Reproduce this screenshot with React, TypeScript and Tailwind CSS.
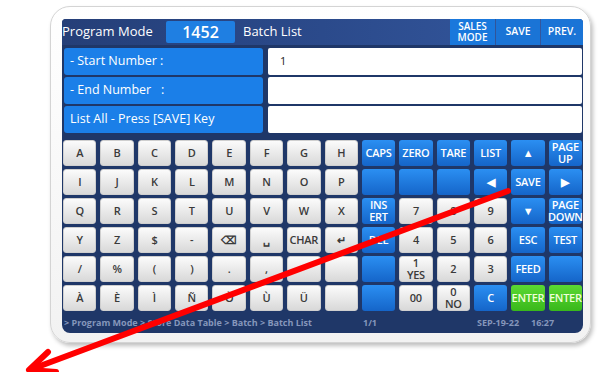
type Kind = "w" | "b" | "g";
type Key = { t: Kind; l?: string };

const w = (l?: string): Key => ({ t: "w", l });
const b = (l?: string): Key => ({ t: "b", l });
const g = (l?: string): Key => ({ t: "g", l });

const keys: Key[][] = [
  [w("A"), w("B"), w("C"), w("D"), w("E"), w("F"), w("G"), w("H"), b("CAPS"), b("ZERO"), b("TARE"), b("LIST"), b("▲"), b("PAGE\nUP")],
  [w("I"), w("J"), w("K"), w("L"), w("M"), w("N"), w("O"), w("P"), b(), b(), b(), b("◀"), b("SAVE"), b("▶")],
  [w("Q"), w("R"), w("S"), w("T"), w("U"), w("V"), w("W"), w("X"), b("INS\nERT"), w("7"), w("8"), w("9"), b("▼"), b("PAGE\nDOWN")],
  [w("Y"), w("Z"), w("$"), w("-"), w("⌫"), w("␣"), w("CHAR"), w("↵"), b("DEL"), w("4"), w("5"), w("6"), b("ESC"), b("TEST")],
  [w("/"), w("%"), w("("), w(")"), w("."), w(","), w("\""), w(), b(), w("1\nYES"), w("2"), w("3"), b("FEED"), b()],
  [w("À"), w("È"), w("Ì"), w("Ñ"), w("Ò"), w("Ù"), w("Ü"), w(), b(), w("00"), w("0\nNO"), b("C"), g("ENTER"), g("ENTER")],
];

const style: Record<Kind, string> = {
  w: "bg-gradient-to-b from-[#fbfbfb] to-[#d9d9d9] text-[#3a3a3a] border border-[#cfcfcf]",
  b: "bg-gradient-to-b from-[#2b8ff2] to-[#1565c9] text-white",
  g: "bg-gradient-to-b from-[#5ad932] to-[#39b81b] text-[#efffd9]",
};

function Pad({ k }: { k: Key }) {
  return (
    <div
      className={`h-[26px] rounded-[3px] flex items-center justify-center text-center whitespace-pre-line leading-[12px] text-[11px] font-semibold tracking-tight ${style[k.t]}`}
    >
      {k.l}
    </div>
  );
}

function FormRow({ label, value }: { label: string; value?: string }) {
  return (
    <div className="flex h-[27px] gap-[5px]">
      <div className="w-[199px] rounded-[3px] bg-[#1b7fe8] text-white text-[12.5px] flex items-center pl-[6px] whitespace-pre">{label}</div>
      <div className="flex-1 bg-white rounded-[2px] text-[#222] text-[11px] flex items-center pl-[12px]">{value}</div>
    </div>
  );
}

export default function App() {
  return (
    <div className="relative w-[600px] h-[372px] bg-white overflow-hidden" style={{ fontFamily: '"Open Sans", "Noto Sans", sans-serif' }}>
      <div className="pt-[6px] pl-[50px]">
        <div className="w-[541px] h-[337px] rounded-[20px] bg-gradient-to-b from-white to-[#f2f2f2] border border-[#d4d4d4] shadow-[2px_3px_4px_rgba(0,0,0,0.25)] pt-[12px] pl-[11px] pr-[7px] pb-[9px]">
          <div className="h-full rounded-[8px] rounded-t-[4px] bg-[#1f3768] flex flex-col overflow-hidden">
            <div className="h-[26px] flex items-stretch bg-gradient-to-r from-[#253f78] via-[#2b4a8b] to-[#3559a0] text-white">
              <div className="text-[13px] flex items-center w-[104px]">Program Mode</div>
              <div className="my-[2px] w-[69px] bg-[#1f7fe2] rounded-[2px] flex items-center justify-center text-[16px] font-semibold">1452</div>
              <div className="text-[13px] flex items-center pl-[8px]">Batch List</div>
              <div className="flex-1" />
              <div className="w-[45px] bg-[#1a78dc] flex items-center justify-center text-center whitespace-pre-line text-[10px] leading-[11px] font-semibold">
                {"SALES\nMODE"}
              </div>
              <div className="w-[44px] ml-[1px] bg-[#1a74d6] flex items-center justify-center text-[10.5px] font-semibold">SAVE</div>
              <div className="w-[42px] ml-[1px] bg-[#1a74d6] flex items-center justify-center text-[10.5px] font-semibold">PREV.</div>
            </div>
            <div className="flex flex-col gap-[2px] pt-[3px] pl-[2px] pr-[1px]">
              <FormRow label="- Start Number :" value="1" />
              <FormRow label="- End Number   :" />
              <FormRow label="List All - Press [SAVE] Key" />
            </div>
            <div className="grid grid-cols-[repeat(14,minmax(0,1fr))] gap-x-[4px] gap-y-[3px] pt-[7px] pl-[1px] pr-[1px]">
              {keys.flat().map((k, i) => (
                <Pad key={i} k={k} />
              ))}
            </div>
            <div className="flex-1 flex items-center pt-[2px] text-[9px] font-bold text-[#8596bb] pl-[2px]">
              <span className="w-[299px]">&gt; Program Mode &gt; Store Data Table &gt; Batch &gt; Batch List</span>
              <span className="w-[114px]">1/1</span>
              <span className="w-[54px]">SEP-19-22</span>
              <span>16:27</span>
            </div>
          </div>
        </div>
      </div>
      <svg className="absolute inset-0 pointer-events-none" width="600" height="372" viewBox="0 0 600 372">
        <line x1="508" y1="191" x2="32" y2="369" stroke="#ff0000" strokeWidth="6" strokeLinecap="round" />
        <polyline points="48,352 29,370 56,372" fill="none" stroke="#ff0000" strokeWidth="6" strokeLinecap="round" strokeLinejoin="round" />
      </svg>
    </div>
  );
}
